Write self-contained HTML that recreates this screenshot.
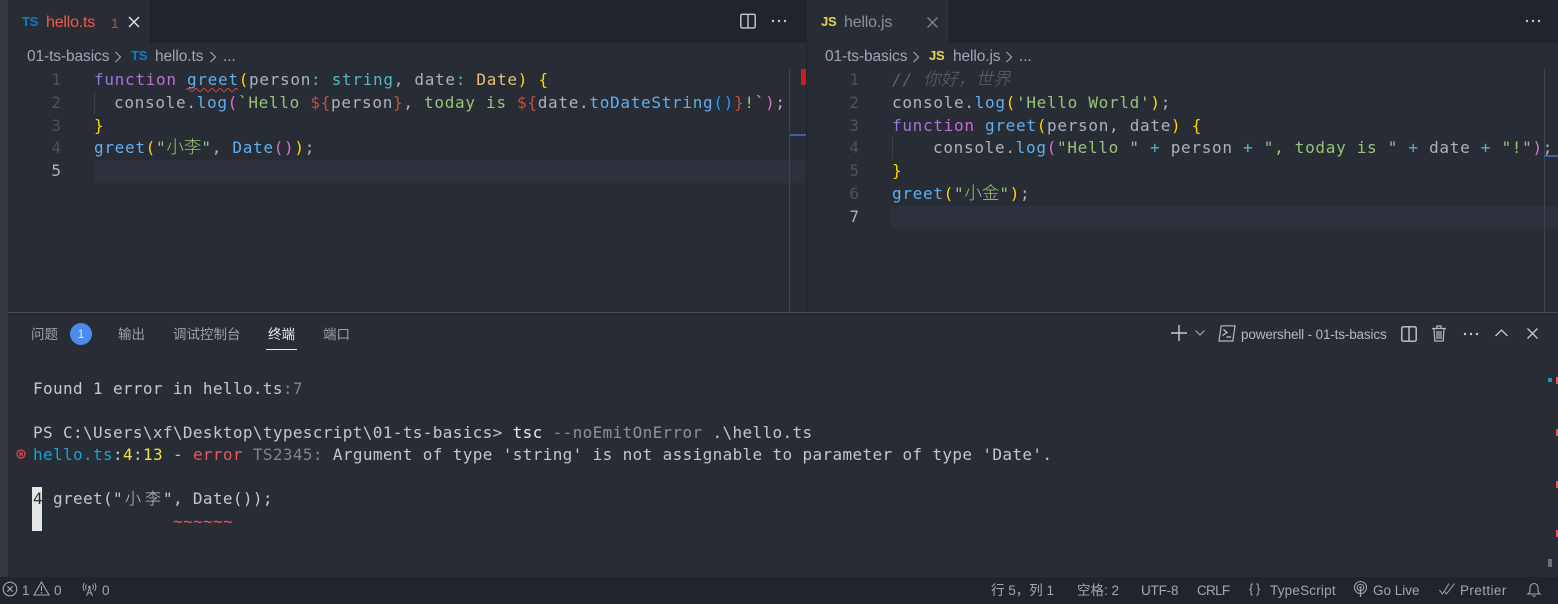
<!DOCTYPE html>
<html lang="zh">
<head>
<meta charset="utf-8">
<title>VS Code</title>
<style>
html,body{margin:0;padding:0;width:1558px;height:604px;overflow:hidden;background:#282c34}
*{box-sizing:border-box}
.a{position:absolute}
.ui{position:absolute;font-family:"Liberation Sans","Noto Sans CJK SC",sans-serif;white-space:nowrap;line-height:20px}
.code{position:absolute;font-family:"DejaVu Sans Mono","Noto Sans CJK SC",monospace;font-size:16px;letter-spacing:.7px;white-space:pre;line-height:23px;color:#abb2bf}
.term{position:absolute;left:33px;font-family:"DejaVu Sans Mono","Noto Sans CJK SC",monospace;font-size:16px;letter-spacing:.36px;white-space:pre;line-height:22px;color:#c3c8d0}
.ln{position:absolute;font-family:"DejaVu Sans Mono",monospace;font-size:16px;line-height:23px;color:#495162;width:20px;text-align:right}
.c{font-family:"Noto Sans CJK SC",sans-serif;letter-spacing:0;font-weight:300;font-size:17.5px;line-height:0}
.tc{font-family:"Noto Sans CJK SC",sans-serif;letter-spacing:0;display:inline-block;width:20px;text-align:center;font-weight:300;line-height:0}
.fn{background:linear-gradient(90deg,#8f7be0,#d46ad0);-webkit-background-clip:text;background-clip:text;color:transparent}
.p{color:#c678dd}.b{color:#61afef}.y{color:#ffd700}.g{color:#98c379}.o{color:#e5c07b}.t{color:#56b6c2}.r{color:#e06c75}.m{color:#da70d6}.bb{color:#179fff}.d{color:#be5046}
svg{position:absolute;overflow:visible}
.tab{font-size:16px;letter-spacing:-.2px}
.bc{font-size:15.5px;letter-spacing:-.1px;color:#a0a7b4}
.ptab{font-size:13.5px;color:#9aa1ad;letter-spacing:0}
.st{font-size:13.5px;color:#a0a7b4;line-height:20px}
</style>
</head>
<body>
<!-- base areas -->
<div class="a" style="left:0;top:0;width:8px;height:577px;background:#333842"></div>
<div class="a" style="left:8px;top:0;width:798px;height:43px;background:#21252b"></div>
<div class="a" style="left:807px;top:0;width:751px;height:43px;background:#21252b"></div>
<div class="a" style="left:8px;top:0;width:143px;height:43px;background:#282c34;border-right:1px solid #1d2026"></div>
<div class="a" style="left:807px;top:0;width:143px;height:43px;background:#282c34;border-right:1px solid #1d2026"></div>
<div class="a" style="left:806px;top:0;width:1px;height:312px;background:#1d2026"></div>
<div class="a" style="left:8px;top:312px;width:1550px;height:1px;background:#474c57"></div>
<div class="a" style="left:0;top:577px;width:1558px;height:27px;background:#21252b"></div>
<!-- active lines -->
<div class="a" style="left:94px;top:160px;width:712px;height:23px;background:#2c313c"></div>
<div class="a" style="left:891px;top:206px;width:667px;height:23px;background:#2c313c"></div>
<!-- indent guides -->
<div class="a" style="left:94px;top:91px;width:1px;height:23px;background:#3b4048"></div>
<div class="a" style="left:892px;top:136px;width:1px;height:23px;background:#3b4048"></div>
<!-- overview rulers -->
<div class="a" style="left:789px;top:69px;width:1px;height:243px;background:#3f444e"></div>
<div class="a" style="left:790px;top:134px;width:16px;height:2px;background:#3d5fa8"></div>
<div class="a" style="left:801px;top:69px;width:5px;height:16px;background:#c81e1e"></div>
<div class="a" style="left:1544px;top:69px;width:1px;height:243px;background:#3f444e"></div>
<div class="a" style="left:1544px;top:155px;width:14px;height:2px;background:#3d5fa8"></div>

<!-- left tab -->
<div class="ui" style="left:22px;top:12px;font-size:13px;font-weight:700;color:#0c7fc4;letter-spacing:-.2px">TS</div>
<div class="ui tab" style="left:46px;top:13px;color:#ef5a50">hello.ts</div>
<div class="ui" style="left:111px;top:13px;font-size:14px;color:#a5564f">1</div>
<svg style="left:128px;top:16px" width="12" height="12" viewBox="0 0 12 12"><path d="M1 1l10 10M11 1L1 11" stroke="#e4e6ea" stroke-width="1.4" fill="none"/></svg>
<!-- left tab actions -->
<svg style="left:740px;top:13px" width="16" height="16" viewBox="0 0 16 16"><rect x=".8" y="1.3" width="14.4" height="13.6" rx="1.5" stroke="#c5c9d0" stroke-width="1.4" fill="none"/><path d="M8 1.3v13.6" stroke="#c5c9d0" stroke-width="1.4"/></svg>
<svg style="left:771px;top:19px" width="16" height="4" viewBox="0 0 16 4" fill="#c5c9d0"><circle cx="2" cy="2" r="1.2"/><circle cx="8" cy="2" r="1.2"/><circle cx="14" cy="2" r="1.2"/></svg>
<!-- left breadcrumb -->
<div class="ui bc" style="left:27px;top:47px">01-ts-basics</div>
<svg style="left:114px;top:51px" width="8" height="12" viewBox="0 0 8 12"><path d="M1.5 1l5 5-5 5" stroke="#a0a7b4" stroke-width="1.1" fill="none"/></svg>
<div class="ui" style="left:131px;top:46px;font-size:13px;font-weight:700;color:#0c7fc4;letter-spacing:-.2px">TS</div>
<div class="ui bc" style="left:155px;top:47px">hello.ts</div>
<svg style="left:209px;top:51px" width="8" height="12" viewBox="0 0 8 12"><path d="M1.5 1l5 5-5 5" stroke="#a0a7b4" stroke-width="1.1" fill="none"/></svg>
<div class="ui bc" style="left:223px;top:47px">...</div>
<!-- left line numbers -->
<div class="ln" style="left:41px;top:68px">1</div>
<div class="ln" style="left:41px;top:91px">2</div>
<div class="ln" style="left:41px;top:114px">3</div>
<div class="ln" style="left:41px;top:136px">4</div>
<div class="ln" style="left:41px;top:159px;color:#abb2bf">5</div>
<!-- left code -->
<div class="code" style="left:94px;top:68px"><span class="fn">function</span> <span class="b">greet</span><span class="y">(</span>person<span class="t">:</span> <span class="t">string</span>, date<span class="t">:</span> <span class="o">Date</span><span class="y">)</span> <span class="y">{</span></div>
<svg style="left:186px;top:87px" width="52" height="4" viewBox="0 0 52 4"><path d="M0 3q2-3 4 0t4 0 4 0 4 0 4 0 4 0 4 0 4 0 4 0 4 0 4 0 4 0 4 0" stroke="#e8403a" stroke-width="1" fill="none"/></svg>
<div class="code" style="left:114px;top:91px">console.<span class="b">log</span><span class="m">(</span><span class="g">`Hello </span><span class="d">${</span>person<span class="d">}</span><span class="g">, today is </span><span class="d">${</span>date.<span class="b">toDateString</span><span class="bb">()</span><span class="d">}</span><span class="g">!`</span><span class="m">)</span>;</div>
<div class="code y" style="left:94px;top:114px;color:#ffd700">}</div>
<div class="code" style="left:94px;top:136px"><span class="b">greet</span><span class="y">(</span><span class="g">"<span class="c">小李</span>"</span>, <span class="b">Date</span><span class="m">()</span><span class="y">)</span>;</div>

<!-- right tab -->
<div class="ui" style="left:821px;top:12px;font-size:13px;font-weight:700;color:#e8d44d;letter-spacing:-.2px">JS</div>
<div class="ui tab" style="left:844px;top:13px;color:#8b919c">hello.js</div>
<svg style="left:927px;top:17px" width="11" height="11" viewBox="0 0 11 11"><path d="M.5.5l10 10M10.5.5l-10 10" stroke="#7f8590" stroke-width="1.3" fill="none"/></svg>
<svg style="left:1525px;top:19px" width="16" height="4" viewBox="0 0 16 4" fill="#c5c9d0"><circle cx="2" cy="2" r="1.2"/><circle cx="8" cy="2" r="1.2"/><circle cx="14" cy="2" r="1.2"/></svg>
<!-- right breadcrumb -->
<div class="ui bc" style="left:825px;top:47px">01-ts-basics</div>
<svg style="left:912px;top:51px" width="8" height="12" viewBox="0 0 8 12"><path d="M1.5 1l5 5-5 5" stroke="#a0a7b4" stroke-width="1.1" fill="none"/></svg>
<div class="ui" style="left:929px;top:46px;font-size:13px;font-weight:700;color:#e8d44d;letter-spacing:-.2px">JS</div>
<div class="ui bc" style="left:953px;top:47px">hello.js</div>
<svg style="left:1005px;top:51px" width="8" height="12" viewBox="0 0 8 12"><path d="M1.5 1l5 5-5 5" stroke="#a0a7b4" stroke-width="1.1" fill="none"/></svg>
<div class="ui bc" style="left:1019px;top:47px">...</div>
<!-- right line numbers -->
<div class="ln" style="left:839px;top:68px">1</div>
<div class="ln" style="left:839px;top:91px">2</div>
<div class="ln" style="left:839px;top:114px">3</div>
<div class="ln" style="left:839px;top:136px">4</div>
<div class="ln" style="left:839px;top:159px">5</div>
<div class="ln" style="left:839px;top:182px">6</div>
<div class="ln" style="left:839px;top:205px;color:#abb2bf">7</div>
<!-- right code -->
<div class="code" style="left:892px;top:68px;color:#5c6370;font-style:italic">// <span class="c" style="font-style:italic">你好，世界</span></div>
<div class="code" style="left:892px;top:91px">console.<span class="b">log</span><span class="y">(</span><span class="g">'Hello World'</span><span class="y">)</span>;</div>
<div class="code" style="left:892px;top:114px"><span class="fn">function</span> <span class="b">greet</span><span class="y">(</span>person, date<span class="y">)</span> <span class="y">{</span></div>
<div class="code" style="left:933px;top:136px">console.<span class="b">log</span><span class="m">(</span><span class="g">"Hello "</span> <span class="t">+</span> person <span class="t">+</span> <span class="g">", today is "</span> <span class="t">+</span> date <span class="t">+</span> <span class="g">"!"</span><span class="m">)</span>;</div>
<div class="code" style="left:892px;top:159px;color:#ffd700">}</div>
<div class="code" style="left:892px;top:182px"><span class="b">greet</span><span class="y">(</span><span class="g">"<span class="c">小金</span>"</span><span class="y">)</span>;</div>

<!-- panel tabs -->
<div class="ui ptab" style="left:31px;top:325px">问题</div>
<div class="a" style="left:70px;top:323px;width:22px;height:22px;border-radius:50%;background:#4d8af0;color:#dfe8f8;font:12px/22px 'Liberation Sans',sans-serif;text-align:center">1</div>
<div class="ui ptab" style="left:118px;top:325px">输出</div>
<div class="ui ptab" style="left:173px;top:325px">调试控制台</div>
<div class="ui ptab" style="left:268px;top:325px;color:#e6e8ec">终端</div>
<div class="a" style="left:266px;top:349px;width:31px;height:1px;background:#e6e8ec"></div>
<div class="ui ptab" style="left:323px;top:325px">端口</div>
<!-- panel actions -->
<svg style="left:1171px;top:325px" width="16" height="16" viewBox="0 0 16 16"><path d="M8 0v16M0 8h16" stroke="#c5c9d0" stroke-width="1.4"/></svg>
<svg style="left:1195px;top:330px" width="10" height="6" viewBox="0 0 10 6"><path d="M.5.5L5 5 9.500.5" stroke="#a9aeb7" stroke-width="1" fill="none"/></svg>
<svg style="left:1218px;top:325px" width="18" height="17" viewBox="0 0 18 17"><path d="M3.200.8H17L14.800 16H1z" stroke="#b4b9c1" stroke-width="1.200" fill="none"/><path d="M5.500 4.500L9 7.500l-4.500 3M8.500 12H13" stroke="#c5c9d0" stroke-width="1.200" fill="none"/></svg>
<div class="ui" style="left:1241px;top:325px;font-size:13.5px;color:#b4b9c1;letter-spacing:-.15px">powershell - 01-ts-basics</div>
<svg style="left:1401px;top:326px" width="16" height="16" viewBox="0 0 16 16"><rect x=".8" y=".8" width="14.400" height="14.400" rx="1.500" stroke="#c5c9d0" stroke-width="1.400" fill="none"/><path d="M8 .8v14.400" stroke="#c5c9d0" stroke-width="1.400"/></svg>
<svg style="left:1432px;top:325px" width="14" height="17" viewBox="0 0 14 17"><path d="M0 3.500h14M5 3V1h4v2" stroke="#b4b9c1" stroke-width="1.300" fill="none"/><path d="M2 4l.8 12h8.400L12 4M5 6v8M7 6v8M9 6v8" stroke="#b4b9c1" stroke-width="1.200" fill="none"/></svg>
<svg style="left:1463px;top:332px" width="16" height="4" viewBox="0 0 16 4" fill="#c5c9d0"><circle cx="2" cy="2" r="1.200"/><circle cx="8" cy="2" r="1.200"/><circle cx="14" cy="2" r="1.200"/></svg>
<svg style="left:1495px;top:329px" width="13" height="8" viewBox="0 0 13 8"><path d="M.5 7L6.500 1l6 6" stroke="#c5c9d0" stroke-width="1.300" fill="none"/></svg>
<svg style="left:1527px;top:328px" width="11" height="11" viewBox="0 0 11 11"><path d="M.5.5l10 10M10.500.5l-10 10" stroke="#c5c9d0" stroke-width="1.300" fill="none"/></svg>

<!-- terminal -->
<div class="term" style="top:378px">Found 1 error in hello.ts<span style="color:#7f8590">:</span><span style="color:#7f8590">7</span></div>
<div class="term" style="top:422px">PS C:\Users\xf\Desktop\typescript\01-ts-basics&gt; <span style="color:#e8e8e8">tsc</span> <span style="color:#8b919c">--noEmitOnError</span> .\hello.ts</div>
<svg style="left:16px;top:449px" width="10" height="10" viewBox="0 0 10 10"><circle cx="5" cy="5" r="4" stroke="#e8484a" stroke-width="1.200" fill="none"/><path d="M3.200 3.200l3.600 3.600M6.800 3.200l-3.600 3.600" stroke="#e8484a" stroke-width="1.100"/></svg>
<div class="term" style="top:444px"><span style="color:#14a5d0">hello.ts</span>:<span style="color:#f0e040">4</span>:<span style="color:#f0e040">13</span> - <span style="color:#f0535a">error</span> <span style="color:#7f8590">TS2345:</span> Argument of type 'string' is not assignable to parameter of type 'Date'.</div>
<div class="a" style="left:32px;top:487px;width:10px;height:44px;background:#e5e5e5"></div>
<div class="term" style="top:488px;color:#282c34">4</div>
<div class="term" style="left:53px;top:488px">greet("<span class="tc">小</span><span class="tc">李</span>", Date());</div>
<div class="term" style="left:173px;top:511px;color:#f0535a">~~~~~~</div>
<!-- terminal ruler marks -->
<div class="a" style="left:1548px;top:378px;width:4px;height:4px;background:#1d8fc0"></div>
<div class="a" style="left:1556px;top:377px;width:2px;height:7px;background:#f0535a"></div>
<div class="a" style="left:1556px;top:429px;width:2px;height:7px;background:#f0535a"></div>
<div class="a" style="left:1556px;top:481px;width:2px;height:7px;background:#f0535a"></div>
<div class="a" style="left:1556px;top:530px;width:2px;height:7px;background:#f0535a"></div>
<div class="a" style="left:1548px;top:559px;width:4px;height:8px;background:#6a6f78"></div>

<!-- status bar -->
<svg style="left:2px;top:581px" width="16" height="16" viewBox="0 0 16 16"><circle cx="8" cy="8" r="6.800" stroke="#a0a7b4" stroke-width="1.100" fill="none"/><path d="M5.300 5.300l5.400 5.400M10.700 5.300l-5.400 5.400" stroke="#a0a7b4" stroke-width="1.100"/></svg>
<div class="ui st" style="left:22px;top:581px">1</div>
<svg style="left:33px;top:581px" width="17" height="15" viewBox="0 0 17 15"><path d="M8.500 1L16 14H1z" stroke="#a0a7b4" stroke-width="1.100" fill="none"/><path d="M8.500 5v5M8.500 11v1.500" stroke="#a0a7b4" stroke-width="1.100"/></svg>
<div class="ui st" style="left:54px;top:581px">0</div>
<svg style="left:82px;top:582px" width="15" height="14" viewBox="0 0 15 14"><path d="M7.500 6L4.500 14M7.500 6l3 8M5.500 11h4" stroke="#a0a7b4" stroke-width="1" fill="none"/><circle cx="7.500" cy="5" r="1.300" fill="#a0a7b4"/><path d="M4.500 7.500a4 4 0 0 1 0-5M10.500 7.500a4 4 0 0 0 0-5M2.500 9a6.500 6.500 0 0 1 0-8M12.500 9a6.500 6.500 0 0 0 0-8" stroke="#a0a7b4" stroke-width="1" fill="none"/></svg>
<div class="ui st" style="left:102px;top:581px">0</div>
<div class="ui st" style="left:991px;top:581px">行 5，列 1</div>
<div class="ui st" style="left:1077px;top:581px">空格: 2</div>
<div class="ui st" style="left:1141px;top:581px;letter-spacing:-.2px">UTF-8</div>
<div class="ui st" style="left:1197px;top:581px;letter-spacing:-.7px">CRLF</div>
<div class="ui st" style="left:1249px;top:579px;font-size:13px;letter-spacing:-.5px">{ }</div>
<div class="ui st" style="left:1270px;top:581px;letter-spacing:.2px">TypeScript</div>
<svg style="left:1353px;top:581px" width="15" height="17" viewBox="0 0 15 17"><circle cx="7.500" cy="6.500" r="6" stroke="#a0a7b4" stroke-width="1.100" fill="none"/><circle cx="7.500" cy="6.500" r="3.300" stroke="#a0a7b4" stroke-width="1" fill="none"/><circle cx="7.500" cy="6.500" r="1.200" fill="#a0a7b4"/><path d="M7.500 8v8" stroke="#a0a7b4" stroke-width="1.300"/></svg>
<div class="ui st" style="left:1373px;top:581px">Go Live</div>
<svg style="left:1439px;top:583px" width="16" height="12" viewBox="0 0 16 12"><path d="M.5 7l3 4L10 .5M5.500 8.500l2 2.500L15.500.5" stroke="#a0a7b4" stroke-width="1" fill="none"/></svg>
<div class="ui st" style="left:1460px;top:581px;letter-spacing:.4px">Prettier</div>
<svg style="left:1527px;top:582px" width="14" height="15" viewBox="0 0 14 15"><path d="M1 12c1.500-1 2-2 2-4V5.500a4 4 0 0 1 8 0V8c0 2 .5 3 2 4zM5.500 13.500a1.800 1.800 0 0 0 3 0" stroke="#a0a7b4" stroke-width="1.100" fill="none"/></svg>
</body>
</html>
